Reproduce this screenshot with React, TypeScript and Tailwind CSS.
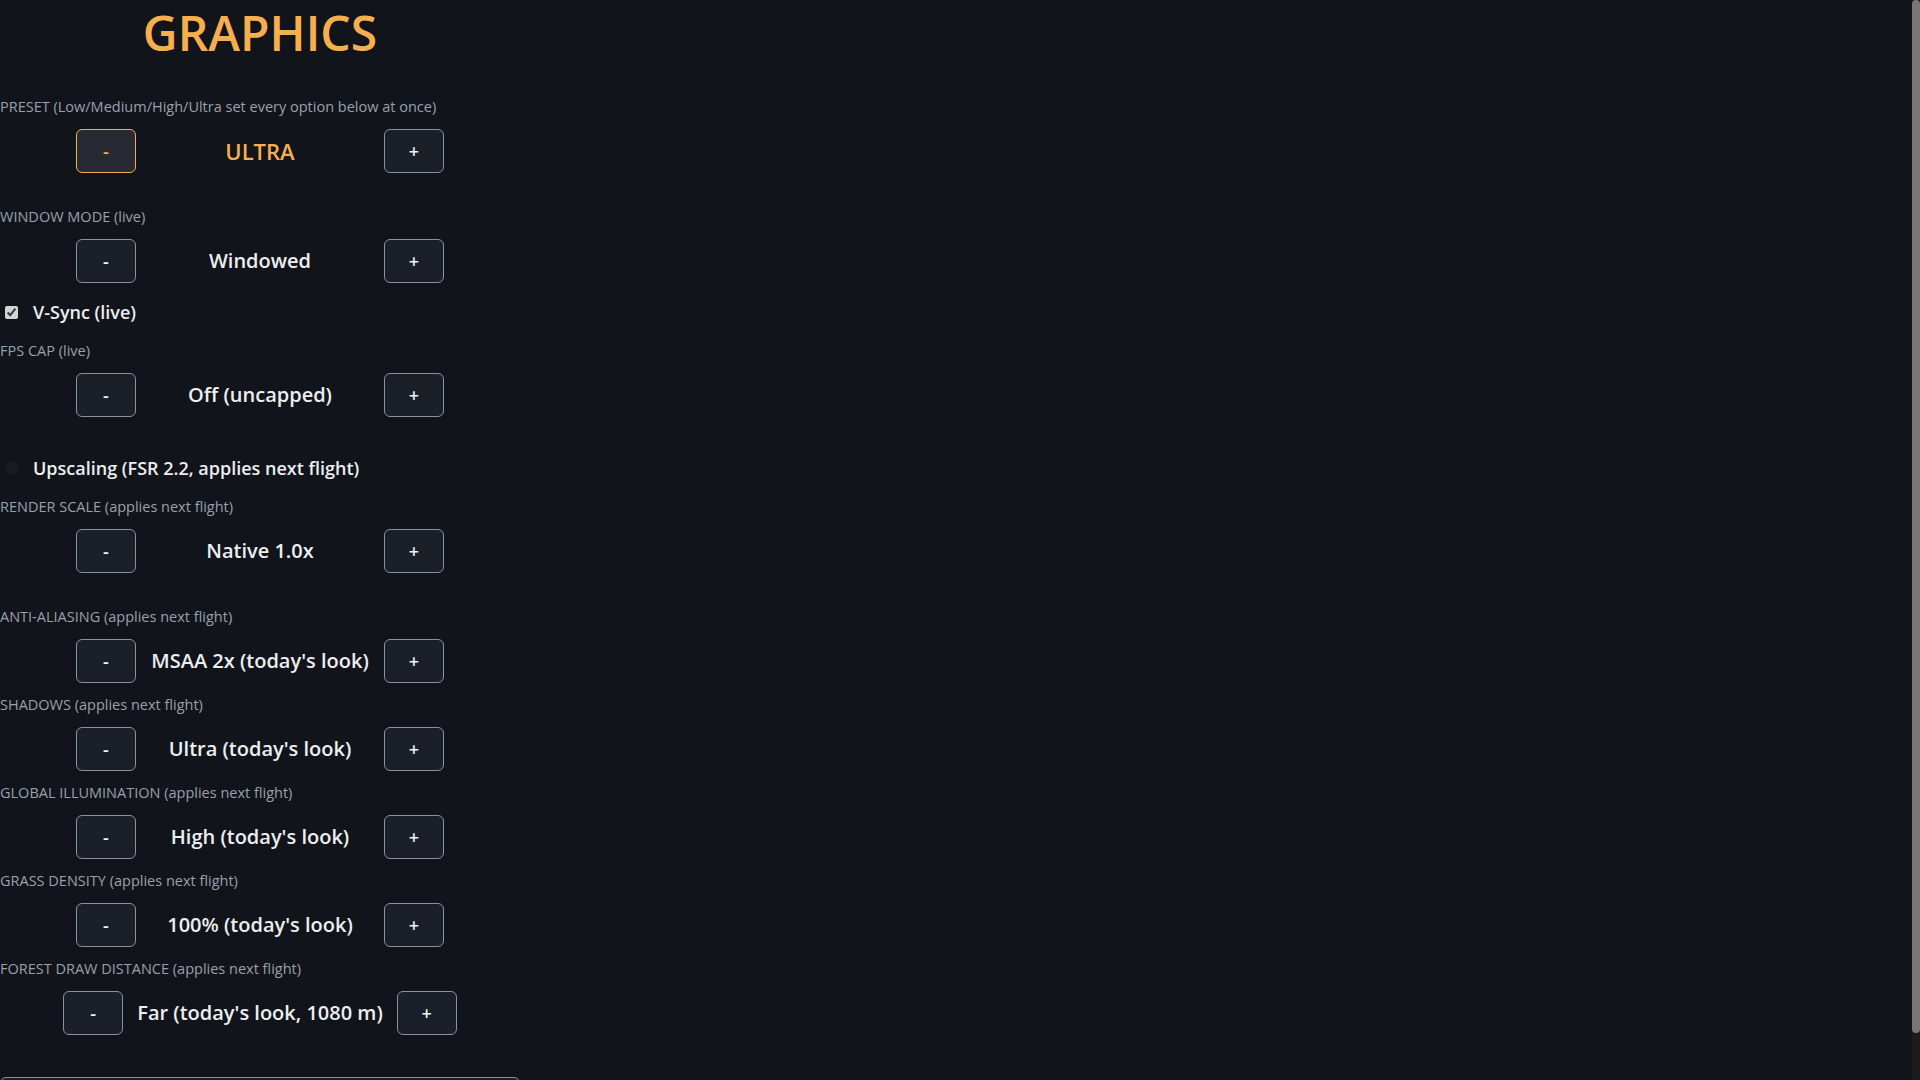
import React from "react";

function StepButton({ children, active }: { children: React.ReactNode; active?: boolean }) {
  return (
    <button
      type="button"
      className={
        active
          ? "flex h-[44px] w-[60px] shrink-0 items-center justify-center rounded-[6px] border border-[#f5ab4a] bg-[#272a33] text-[18px] font-semibold text-[#f5ab4a]"
          : "flex h-[44px] w-[60px] shrink-0 items-center justify-center rounded-[6px] border border-[#8c929c] bg-[#1b1f27] text-[18px] font-semibold text-[#eef0f3]"
      }
    >
      {children}
    </button>
  );
}

function Setting({
  label,
  value,
  accent,
  className,
}: {
  label: string;
  value: string;
  accent?: boolean;
  className: string;
}) {
  return (
    <div className={className}>
      <p className="text-[14.5px] font-medium leading-[20px] text-[#9aa0aa]">{label}</p>
      <div className="mt-3 flex h-[44px] items-center justify-center gap-[14px]">
        <StepButton active={accent}>-</StepButton>
        <span
          className={
            accent
              ? "min-w-[220px] text-center text-[22px] font-semibold text-[#f7ae4f]"
              : "min-w-[220px] text-center text-[20px] font-semibold text-[#eceef1]"
          }
        >
          {value}
        </span>
        <StepButton>+</StepButton>
      </div>
    </div>
  );
}

export default function App() {
  return (
    <div className="flex h-screen overflow-hidden bg-[#11141b] font-['Open_Sans',sans-serif] text-[#eceef1]">
      <div className="min-w-0 flex-1 overflow-hidden">
        <div className="w-[520px] pb-2">
          <h1 className="h-[65px] text-center text-[48px] font-semibold leading-[65px] text-[#f7ae4f]">
            GRAPHICS
          </h1>

          <Setting
            className="mt-[32px]"
            label="PRESET (Low/Medium/High/Ultra set every option below at once)"
            value="ULTRA"
            accent
          />
          <Setting className="mt-[34px]" label="WINDOW MODE (live)" value="Windowed" />

          <label className="mt-[17px] flex h-[24px] items-center gap-[15px]">
            <input
              type="checkbox"
              defaultChecked
              className="m-0 ml-[5px] h-[13px] w-[13px] accent-[#d4d4d4]"
            />
            <span className="text-[18px] font-semibold leading-[24px]">V-Sync (live)</span>
          </label>

          <Setting className="mt-[17px]" label="FPS CAP (live)" value="Off (uncapped)" />

          <label className="mt-[39px] flex h-[24px] items-center gap-[14px]">
            <span className="ml-[5px] h-[14px] w-[14px] rounded-full bg-[#171a21]" />
            <span className="text-[18px] font-semibold leading-[24px]">
              Upscaling (FSR 2.2, applies next flight)
            </span>
          </label>

          <Setting className="mt-[17px]" label="RENDER SCALE (applies next flight)" value="Native 1.0x" />
          <Setting
            className="mt-[34px]"
            label="ANTI-ALIASING (applies next flight)"
            value="MSAA 2x (today's look)"
          />
          <Setting className="mt-3" label="SHADOWS (applies next flight)" value="Ultra (today's look)" />
          <Setting
            className="mt-3"
            label="GLOBAL ILLUMINATION (applies next flight)"
            value="High (today's look)"
          />
          <Setting
            className="mt-3"
            label="GRASS DENSITY (applies next flight)"
            value="100% (today's look)"
          />
          <Setting
            className="mt-3"
            label="FOREST DRAW DISTANCE (applies next flight)"
            value="Far (today's look, 1080 m)"
          />

          <div className="mt-[42px] h-[44px] w-full rounded-[6px] border border-[#8c929c] bg-[#1b1f27]" />
        </div>
      </div>

      <div className="flex w-2 shrink-0 flex-col bg-[#1b1b1b]">
        <div className="h-[1033px] w-full rounded-full bg-[#777777]" />
      </div>
    </div>
  );
}
